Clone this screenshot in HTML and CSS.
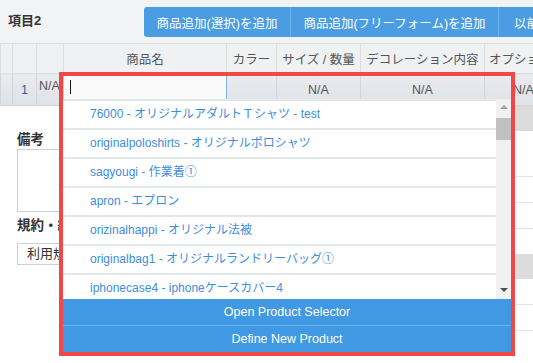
FILE: index.html
```html
<!DOCTYPE html>
<html lang="ja">
<head>
    <meta charset="UTF-8">
    <title>項目2</title>
    <link rel="stylesheet" href="styles.css">
</head>
<body>
    <div class="page">
        <div class="toolbar">
            <h2 class="item-title">項目2</h2>
            <div class="btn-group">
                <button class="tool-btn btn-select">商品追加(選択)を追加</button>
                <button class="tool-btn btn-free">商品追加(フリーフォーム)を追加</button>
                <button class="tool-btn btn-prev">以前の商品を追加</button>
            </div>
        </div>

        <table class="items">
            <colgroup>
                <col class="c-handle">
                <col class="c-no">
                <col class="c-code">
                <col class="c-name">
                <col class="c-color">
                <col class="c-size">
                <col class="c-deco">
                <col class="c-opt">
            </colgroup>
            <thead>
                <tr>
                    <th></th>
                    <th></th>
                    <th></th>
                    <th>商品名</th>
                    <th>カラー</th>
                    <th>サイズ / 数量</th>
                    <th>デコレーション内容</th>
                    <th class="th-opt">オプション</th>
                </tr>
            </thead>
            <tbody>
                <tr>
                    <td></td>
                    <td class="row-no">1</td>
                    <td class="row-code">N/A</td>
                    <td class="row-name">
                        <div class="name-input"><span class="caret"></span><span class="grip"></span></div>
                    </td>
                    <td></td>
                    <td>N/A</td>
                    <td>N/A</td>
                    <td class="td-opt">N/A</td>
                </tr>
            </tbody>
        </table>

        <div class="lower">
            <div class="remarks">
                <h3 class="section-title title-notes">備考</h3>
                <div class="notes-box"></div>
                <h3 class="section-title title-terms">規約・約款</h3>
                <div class="terms-box">利用規約</div>
            </div>
            <div class="side">
                <div class="side-row shade"></div>
                <div class="side-row tall line"></div>
                <div class="side-row line"></div>
                <div class="side-row line"></div>
                <div class="side-row"></div>
                <div class="side-row shade"></div>
                <div class="side-row line"></div>
                <div class="side-row line"></div>
            </div>
        </div>

        <div class="dropdown">
            <div class="dropdown-list">
                <ul class="options">
                    <li>76000 - オリジナルアダルトＴシャツ - test</li>
                    <li>originalpoloshirts - オリジナルポロシャツ</li>
                    <li>sagyougi - 作業着①</li>
                    <li>apron - エプロン</li>
                    <li>orizinalhappi - オリジナル法被</li>
                    <li>originalbag1 - オリジナルランドリーバッグ①</li>
                    <li>iphonecase4 - iphoneケースカバー4</li>
                </ul>
                <div class="scrollbar">
                    <span class="arrow arrow-up"></span>
                    <span class="thumb"></span>
                    <span class="arrow arrow-down"></span>
                </div>
            </div>
            <button class="dd-btn">Open Product Selector</button>
            <button class="dd-btn dd-btn-last">Define New Product</button>
        </div>

        <div class="highlight"></div>
    </div>
</body>
</html>
```

FILE: styles.css
```css
body {
    margin: 0;
    background-color: #fff;
    font-family: "Liberation Sans", "Noto Sans CJK JP", sans-serif;
    font-size: 12px;
    color: #444;
}

.page {
    position: relative;
    width: 533px;
    height: 363px;
    overflow: hidden;
}

/* toolbar */

.toolbar {
    display: flex;
    height: 43px;
    background-color: #f2f3f5;
}

.item-title {
    flex: none;
    width: 144px;
    margin: 0;
    padding: 13px 0 0 8px;
    font-size: 13px;
    line-height: 16px;
    font-weight: bold;
    color: #333;
    box-sizing: border-box;
}

.btn-group {
    display: flex;
    flex: none;
    margin-top: 7px;
    height: 30px;
}

.tool-btn {
    flex: none;
    border: none;
    border-left: 1px solid #6eb1ea;
    background-color: #4a9de2;
    color: #fff;
    font-family: inherit;
    font-size: 12.5px;
    padding: 0;
    white-space: nowrap;
    cursor: pointer;
}

.btn-select {
    width: 146px;
    border-left: none;
    border-radius: 3px 0 0 3px;
}

.btn-free {
    width: 208px;
}

.btn-prev {
    width: 120px;
    text-align: left;
    padding-left: 15px;
}

/* table */

.items {
    border-collapse: collapse;
    table-layout: fixed;
    width: 600px;
}

.c-handle { width: 12px; }
.c-no { width: 24px; }
.c-code { width: 27px; }
.c-name { width: 163px; }
.c-color { width: 50px; }
.c-size { width: 84px; }
.c-deco { width: 124px; }
.c-opt { width: 116px; }

.items th {
    height: 29px;
    padding: 0;
    background-color: #eff1f3;
    border: 1px solid #dcdfe2;
    font-weight: normal;
    font-size: 12.5px;
    color: #555;
    white-space: nowrap;
    overflow: hidden;
}

.items th.th-opt {
    text-align: left;
    padding-left: 4px;
}

.items td {
    height: 26px;
    padding: 0;
    background: linear-gradient(#e9ebef, #dfe2e7);
    border: 1px solid #d3d6db;
    text-align: center;
    color: #555;
    font-size: 12.5px;
    white-space: nowrap;
    overflow: hidden;
}

.items td.row-no {
    color: #2f5f9f;
}

.items td.row-code {
    vertical-align: top;
    text-align: left;
    padding: 5px 0 0 2px;
}

.items td.row-name {
    position: relative;
    background: #fafafa;
    border-right: 1px solid #7fb2e3;
}

.items td.td-opt {
    text-align: left;
    padding-left: 28px;
}

.name-input {
    height: 26px;
}

.caret {
    position: absolute;
    left: 6px;
    top: 6px;
    width: 1px;
    height: 14px;
    background-color: #111;
}

.grip {
    position: absolute;
    right: 3px;
    bottom: 2px;
    border-left: 4px solid transparent;
    border-bottom: 4px solid #555;
}

/* content behind the dropdown */

.lower {
    display: flex;
    align-items: flex-start;
}

.remarks {
    width: 460px;
    padding-left: 17px;
}

.section-title {
    margin: 0;
    font-size: 13.5px;
    line-height: 16px;
    font-weight: bold;
    color: #333;
}

.title-notes {
    margin-top: 26px;
}

.notes-box {
    margin-top: 1px;
    height: 61px;
    border: 1px solid #d0d0d0;
}

.title-terms {
    margin-top: 6px;
}

.terms-box {
    margin-top: 9px;
    height: 20px;
    line-height: 20px;
    padding-left: 9px;
    border: 1px solid #d0d0d0;
    font-size: 13px;
    color: #333;
}

.side {
    margin-left: 39px;
    width: 80px;
}

.side-row {
    box-sizing: border-box;
    height: 25px;
}

.side-row.line {
    height: 26px;
    border-bottom: 1px solid #e3e3e3;
}

.side-row.tall {
    height: 46px;
}

.side-row.shade {
    background-color: #dcdcdc;
}

/* dropdown */

.dropdown {
    position: absolute;
    left: 63px;
    top: 99px;
    width: 448px;
}

.dropdown-list {
    display: flex;
    height: 200px;
    background-color: #fff;
    overflow: hidden;
}

.options {
    flex: 1;
    margin: 0;
    padding: 0;
    list-style: none;
}

.options li {
    height: 27px;
    line-height: 27px;
    padding-left: 27px;
    border-top: 2px solid #e2e7e8;
    color: #3f8ddc;
    white-space: nowrap;
}

.scrollbar {
    position: relative;
    width: 15px;
    background-color: #f1f1f1;
}

.thumb {
    position: absolute;
    left: 0;
    top: 19px;
    width: 15px;
    height: 22px;
    background-color: #c1c1c1;
}

.arrow {
    position: absolute;
    left: 4px;
    border-left: 4px solid transparent;
    border-right: 4px solid transparent;
}

.arrow-up {
    top: 6px;
    border-bottom: 4px solid #a3a3a3;
}

.arrow-down {
    bottom: 7px;
    border-top: 4px solid #505050;
}

.dd-btn {
    display: block;
    width: 100%;
    height: 27px;
    border: none;
    border-top: 1px solid #6cb0ea;
    background-color: #4199e3;
    color: #fff;
    font-family: inherit;
    font-size: 12.5px;
    padding: 0;
    cursor: pointer;
}

.dd-btn:first-of-type {
    border-top: none;
    height: 26px;
}

/* annotation frame */

.highlight {
    position: absolute;
    left: 59px;
    top: 72px;
    width: 448px;
    height: 276px;
    border: 4px solid #f24747;
    pointer-events: none;
}
```
